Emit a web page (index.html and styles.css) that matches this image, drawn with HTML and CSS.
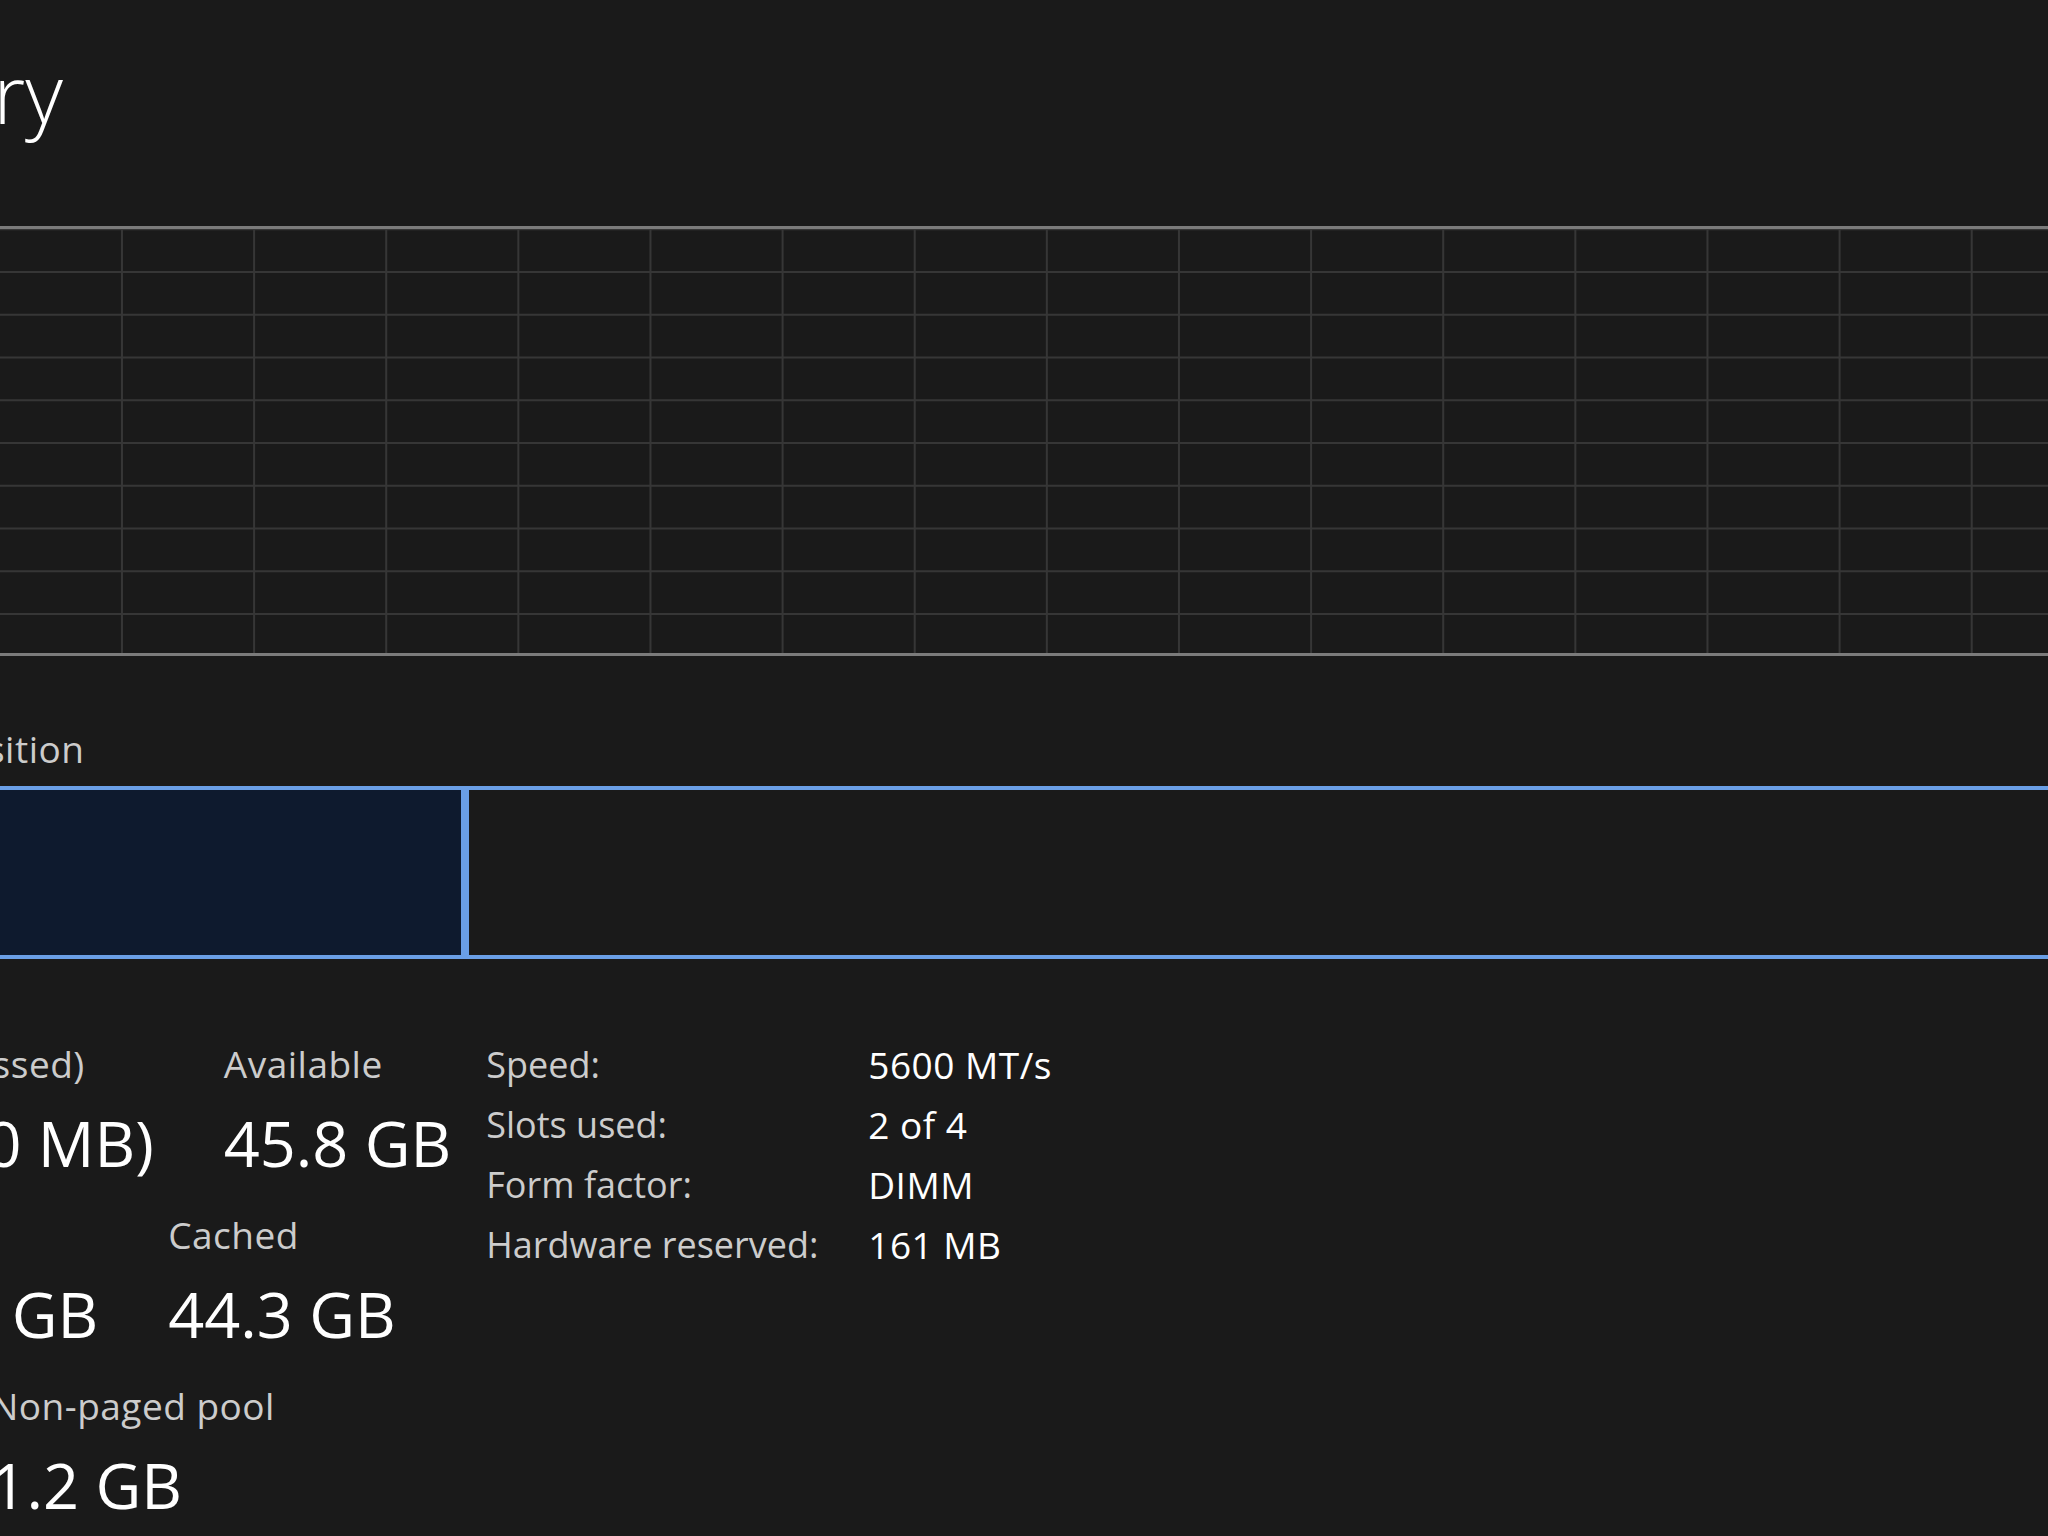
FILE: index.html
```html
<!DOCTYPE html>
<html lang="en">
<head>
    <meta charset="UTF-8">
    <title>Task Manager - Memory</title>
    <link rel="stylesheet" href="styles.css">
</head>
<body>
    <div class="perf">
        <h1 class="title">Memory</h1>

        <!-- usage graph, empty grid -->
        <div class="chart"></div>

        <div class="comp-label">Memory composition</div>
        <div class="comp-bar">
            <div class="seg seg-used" style="width: 757px"></div>
            <div class="seg seg-free"></div>
        </div>

        <div class="details">
            <div class="stats">
                <div class="stat-row">
                    <div class="stat">
                        <div class="stat-label">In use (Compressed)</div>
                        <div class="stat-value">17.9 GB (0 MB)</div>
                    </div>
                    <div class="stat">
                        <div class="stat-label">Available</div>
                        <div class="stat-value">45.8 GB</div>
                    </div>
                </div>
                <div class="stat-row">
                    <div class="stat">
                        <div class="stat-label">Committed</div>
                        <div class="stat-value">21.7/73.7 GB</div>
                    </div>
                    <div class="stat">
                        <div class="stat-label">Cached</div>
                        <div class="stat-value">44.3 GB</div>
                    </div>
                </div>
                <div class="stat-row">
                    <div class="stat">
                        <div class="stat-label">Paged pool</div>
                        <div class="stat-value">1.0 GB</div>
                    </div>
                    <div class="stat">
                        <div class="stat-label">Non-paged pool</div>
                        <div class="stat-value">1.2 GB</div>
                    </div>
                </div>
            </div>

            <div class="specs">
                <div class="spec-label">Speed:</div>
                <div class="spec-value">5600 MT/s</div>
                <div class="spec-label">Slots used:</div>
                <div class="spec-value">2 of 4</div>
                <div class="spec-label">Form factor:</div>
                <div class="spec-value">DIMM</div>
                <div class="spec-label">Hardware reserved:</div>
                <div class="spec-value">161 MB</div>
            </div>
        </div>
    </div>
</body>
</html>
```

FILE: styles.css
```css
html, body {
    margin: 0;
    padding: 0;
    height: 100%;
    overflow: hidden;
    background-color: #1a1a1a;
}
body {
    font-family: "Open Sans", "Noto Sans", sans-serif;
    color: #fff;
}
/* the panel is wider than the window, so it is cut on both sides */
.perf {
    margin: 0 -160px 0 -292px;
    padding-top: 42px;
}
.title {
    margin: 0 0 0 49px;
    font-size: 82px;
    font-weight: 300;
    line-height: 100px;
    color: #fff;
}
.chart {
    margin-top: 84px;
    height: 424px;
    border-top: 3px solid #7b7b7b;
    border-bottom: 3px solid #7b7b7b;
    background-color: #1a1a1a;
    background-image:
        linear-gradient(to right, #363636 2px, transparent 2px),
        linear-gradient(to bottom, #363636 2px, transparent 2px);
    background-size: 132.14px 100%, 100% 42.75px;
    background-position: 16.6px 0, 0 42px;
}
.comp-label {
    margin-top: 73px;
    font-size: 37px;
    letter-spacing: 0.5px;
    line-height: 40px;
    color: #cccccc;
}
.comp-bar {
    display: flex;
    margin-top: 17px;
    height: 173px;
}
.seg {
    box-sizing: border-box;
    border: 4px solid #6a9fe6;
}
.seg-used {
    flex: none;
    background-color: #0e1a2e;
}
.seg-free {
    flex: 1;
}
.details {
    display: flex;
    align-items: flex-start;
    margin-top: 76px;
}
.stats {
    display: flex;
    flex-direction: column;
    gap: 23px;
    margin-left: 15px;
}
.stat-row {
    display: flex;
    gap: 70px;
}
.stat-label {
    font-size: 37px;
    letter-spacing: 0.5px;
    line-height: 58px;
    color: #cccccc;
    white-space: nowrap;
}
.stat-value {
    margin-top: 10px;
    font-size: 63px;
    line-height: 80px;
    white-space: nowrap;
}
.specs {
    display: grid;
    grid-template-columns: 382px auto;
    margin-left: 35px;
    font-size: 36px;
    line-height: 60px;
}
.spec-label {
    color: #cccccc;
    white-space: nowrap;
}
.spec-value {
    font-size: 37px;
    letter-spacing: 0.5px;
    color: #fff;
    white-space: nowrap;
}
```
